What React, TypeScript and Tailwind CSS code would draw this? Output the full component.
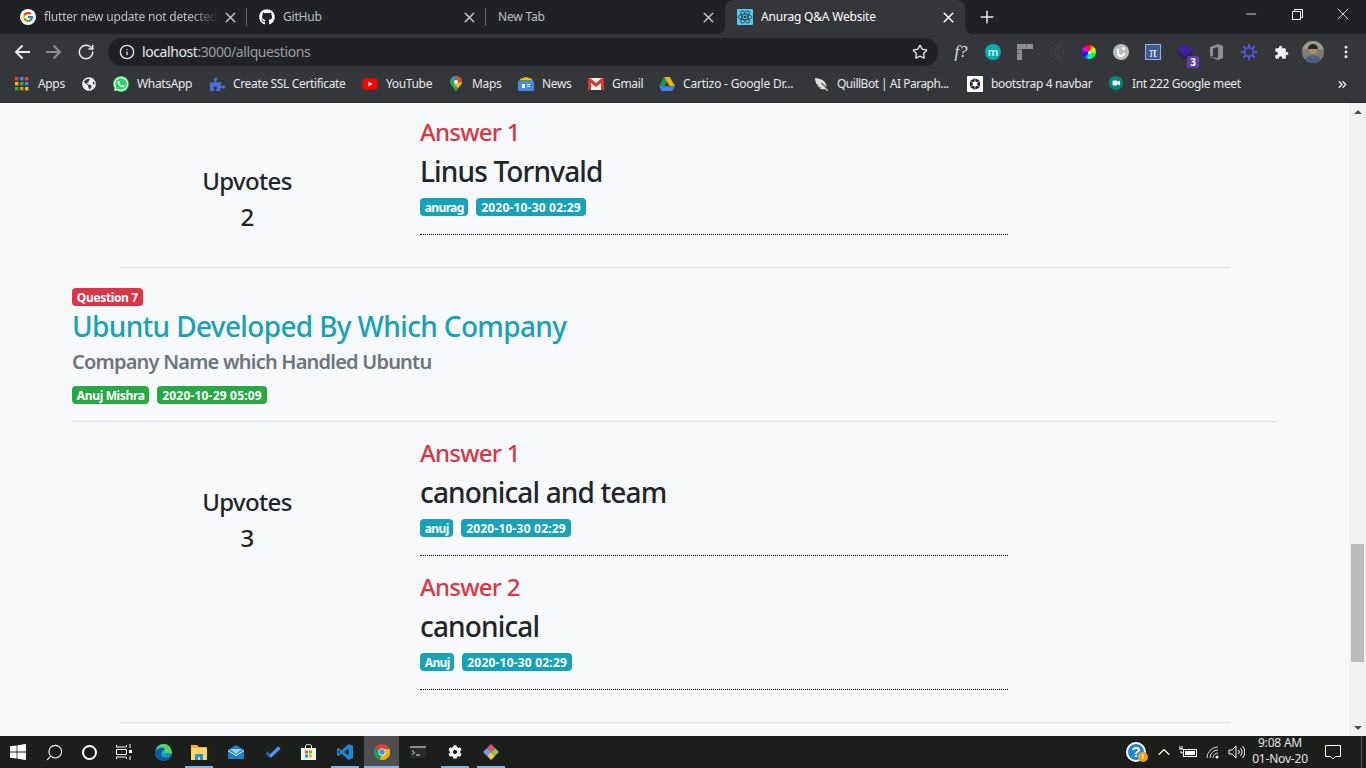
import React from "react";
import { X, Plus, RotateCw, Info, Star, MoreVertical, ChevronsRight, ChevronUp, Search, Minus } from "lucide-react";
import { FcGoogle } from "react-icons/fc";
import { FaGithub, FaGlobeAmericas, FaWhatsapp, FaPuzzlePiece, FaFeatherAlt, FaCog } from "react-icons/fa";

const Ui = "font-['Noto_Sans','Open_Sans',sans-serif]";

function ReactLogo() {
  return (
    <svg width="16" height="16" viewBox="0 0 16 16" className="rounded-[1px] bg-[#55c8ee]">
      <g fill="none" stroke="#20323c" strokeWidth="0.8">
        <ellipse cx="8" cy="8" rx="7" ry="2.7" />
        <ellipse cx="8" cy="8" rx="7" ry="2.7" transform="rotate(60 8 8)" />
        <ellipse cx="8" cy="8" rx="7" ry="2.7" transform="rotate(120 8 8)" />
      </g>
      <circle cx="8" cy="8" r="1.3" fill="#20323c" />
    </svg>
  );
}

function Tab({ icon, title, sep, active, fade }: { icon?: React.ReactNode; title: string; sep?: boolean; active?: boolean; fade?: boolean }) {
  return (
    <div className={`relative flex h-[34px] flex-none items-center pl-[12px] pr-[8px] ${active ? "w-[240px] rounded-t-[8px] bg-[#35363a] text-white" : "w-[239px] text-[#bdc1c6]"}`}>
      {active && <span className="absolute -left-[8px] bottom-0 h-[8px] w-[8px] bg-[radial-gradient(circle_at_0_0,transparent_8px,#35363a_8px)]" />}
      {active && <span className="absolute -right-[8px] bottom-0 h-[8px] w-[8px] bg-[radial-gradient(circle_at_100%_0,transparent_8px,#35363a_8px)]" />}
      {icon && <span className="mr-[8px] flex h-4 w-4 flex-none items-center justify-center">{icon}</span>}
      <span className={`flex-1 overflow-hidden whitespace-nowrap text-[12px] leading-[18px] tracking-[-0.2px] ${fade ? "[mask-image:linear-gradient(90deg,black_85%,transparent)]" : ""}`}>{title}</span>
      <X size={17} strokeWidth={2.2} className={`ml-1 flex-none ${active ? "text-white" : "text-[#bdc1c6]"}`} />
      {sep && <span className="absolute right-0 top-[8px] h-[18px] w-px bg-[#5f6368]" />}
    </div>
  );
}

function Bm({ w, icon, label, t = "tracking-[-0.35px]" }: { w: string; icon: React.ReactNode; label?: string; t?: string }) {
  return (
    <div className={`flex h-full flex-none items-center ${w}`}>
      <span className="flex h-4 w-4 flex-none items-center justify-center">{icon}</span>
      {label && <span className={`ml-[8px] whitespace-nowrap text-[12px] text-[#e8eaed] ${t}`}>{label}</span>}
    </div>
  );
}

function Ext({ children }: { children: React.ReactNode }) {
  return <div className="relative flex h-8 w-8 flex-none items-center justify-center">{children}</div>;
}

function Badge({ tone, t = "tracking-[-0.35px]", children }: { tone: "red" | "green" | "blue"; t?: string; children: React.ReactNode }) {
  const c = tone === "red" ? "bg-[#dc3545]" : tone === "green" ? "bg-[#28a745]" : "bg-[#17a2b8]";
  return <span className={`inline-flex h-[18px] items-center rounded-[4px] px-[4.8px] pt-[1px] text-[12px] font-bold leading-[16px] text-white ${t} ${c}`}>{children}</span>;
}

function Answer({ n, text, who, when }: { n: number; text: string; who: string; when: string }) {
  return (
    <div className="h-[134px]">
      <div className="h-[29px] text-[24px] font-medium leading-[26px] tracking-[-0.75px] text-[#dc3545]">Answer {n}</div>
      <div className="mt-[7px] h-[34px] text-[28px] font-medium leading-[33px] tracking-[-0.85px] text-[#212529]">{text}</div>
      <div className="mt-[9px] flex h-[18px] gap-2">
        <Badge tone="blue" t="tracking-[-0.65px]">{who}</Badge>
        <Badge tone="blue" t="tracking-[0.2px]">{when}</Badge>
      </div>
      <div className="mt-[18px] border-b border-dotted border-black" />
    </div>
  );
}

function Answers({ up, items }: { up: number; items: { text: string; who: string; when: string }[] }) {
  return (
    <div className="flex">
      <div className="w-[348px] flex-none pl-[2px] pt-[47px] text-center text-[24px] font-medium leading-[29px] tracking-[-0.65px] text-[#212529]">
        <div>Upvotes</div>
        <div className="mt-[7px]">{up}</div>
      </div>
      <div className="w-[588px] flex-none">
        {items.map((a, i) => (
          <Answer key={i} n={i + 1} {...a} />
        ))}
      </div>
    </div>
  );
}

function TabStrip() {
  return (
    <div className="flex h-[34px] flex-none items-start bg-[#202124] pl-[8px]">
      <Tab sep fade title="flutter new update not detected a" icon={<span className="flex h-4 w-4 items-center justify-center rounded-full bg-white"><FcGoogle size={12} /></span>} />
      <Tab sep title="GitHub" icon={<FaGithub size={16} color="#fff" />} />
      <Tab title="New Tab" />
      <Tab active title="Anurag Q&A Website" icon={<ReactLogo />} />
      <div className="ml-[12px] flex h-[34px] items-center">
        <Plus size={20} strokeWidth={1.8} color="#e8eaed" />
      </div>
      <div className="ml-auto flex h-[28px] items-center text-white">
        <div className="flex w-[46px] justify-center"><Minus size={16} strokeWidth={1.2} /></div>
        <div className="flex w-[46px] justify-center">
          <svg width="11" height="11" viewBox="0 0 11 11" fill="none" stroke="#fff"><path d="M.5 2.5h8v8h-8zM2.5 2.5v-2h8v8h-2" /></svg>
        </div>
        <div className="flex w-[46px] justify-center"><X size={20} strokeWidth={1} /></div>
      </div>
    </div>
  );
}

function Toolbar() {
  return (
    <div className="flex h-[32px] flex-none items-center bg-[#35363a] pl-[6px] pt-[4px]">
      <div className="flex h-8 w-8 items-center justify-center">
        <svg width="16" height="16" viewBox="0 0 16 16" fill="none" stroke="#e8eaed" strokeWidth="2"><path d="M16 8H2M8.500 1.500L2 8l6.500 6.500" /></svg>
      </div>
      <div className="flex h-8 w-8 items-center justify-center">
        <svg width="16" height="16" viewBox="0 0 16 16" fill="none" stroke="#8a8c8f" strokeWidth="2"><path d="M0 8h14M7.500 1.500L14 8l-6.500 6.500" /></svg>
      </div>
      <div className="flex h-8 w-8 items-center justify-center"><RotateCw size={18} strokeWidth={2} color="#e8eaed" /></div>
      <div className="ml-[6px] flex h-[28px] w-[830px] flex-none items-center rounded-full bg-[#202124] pl-[11px] pr-[10px]">
        <Info size={16} strokeWidth={2} color="#e8eaed" />
        <span className="ml-[7px] pb-[2px] text-[14px] tracking-[-0.42px] text-[#e8eaed]">localhost<span className="text-[#9aa0a6]">:3000/allquestions</span></span>
        <Star size={16} strokeWidth={2} color="#e8eaed" className="ml-auto" />
      </div>
      <div className="ml-[7px] flex items-center">
        <Ext><span className="font-['Liberation_Serif',serif] text-[17px] italic text-[#e0e0e0]">f?</span></Ext>
        <Ext><span className="flex h-4 w-4 items-center justify-center rounded-full bg-[#00adb5] text-[11px] font-medium leading-[14px] text-white">m</span></Ext>
        <Ext>
          <svg width="16" height="16" viewBox="0 0 16 16"><path d="M0 0h16v5H5v11H0z" fill="#8e8e8e" /><path d="M0 5h5v1H0zM0 9h3v1H0zM9 0h1v3H9z" fill="#5f5f5f" /></svg>
        </Ext>
        <Ext>
          <svg width="16" height="16" viewBox="0 0 16 16" fill="none" stroke="#44464a"><circle cx="8" cy="8" r="6.5" /><circle cx="8" cy="8" r="3" /></svg>
        </Ext>
        <Ext>
          <span className="flex h-[14px] w-[14px] items-center justify-center rounded-full bg-[conic-gradient(#f00,#ff0,#0f0,#0ff,#00f,#f0f,#f00)]"><span className="h-[3px] w-[3px] rounded-full bg-white" /></span>
        </Ext>
        <Ext>
          <svg width="16" height="16" viewBox="0 0 16 16"><circle cx="8" cy="8" r="8" fill="#bdbdbd" /><path d="M5 5v4a3 3 0 0 0 6 0" fill="none" stroke="#fff" strokeWidth="2" /><path d="M9 4l3 1" stroke="#fff" strokeWidth="2" /></svg>
        </Ext>
        <Ext><span className="flex h-4 w-4 items-center justify-center border border-[#9db0d0] bg-[#3d5a99] font-['Liberation_Serif',serif] text-[15px] leading-[14px] text-white">π</span></Ext>
        <Ext>
          <svg width="16" height="16" viewBox="0 0 16 16"><path d="M8 0l8 6-8 6-8-6z" fill="#3f1ea0" /><path d="M0 7l8 6 8-6v2l-8 6-8-6z" fill="#2c1478" /></svg>
          <span className="absolute bottom-[0px] right-[2px] flex h-[12px] w-[12px] items-center justify-center rounded-[2px] bg-[#5b3db5] text-[10px] font-bold leading-[12px] text-white">3</span>
        </Ext>
        <Ext>
          <svg width="14" height="16" viewBox="0 0 14 16"><path d="M0 3l8-3 5 2v12l-5 2-8-3 8 1V3L3 4.5v7L0 13z" fill="#8f8f8f" /></svg>
        </Ext>
        <Ext>
          <svg width="16" height="16" viewBox="0 0 16 16"><g stroke="#5256e6" strokeWidth="2"><path d="M8 0v16M0 8h16M2.3 2.3l11.4 11.4M13.7 2.3L2.3 13.7" /></g><circle cx="8" cy="8" r="4.4" fill="#35363a" stroke="#5256e6" strokeWidth="1.6" /></svg>
        </Ext>
        <Ext>
          <svg width="15" height="15" viewBox="0 0 24 24" fill="#f1f3f4"><path d="M20.500 11H19V7a2 2 0 0 0-2-2h-4V3.500a2.500 2.500 0 0 0-5 0V5H4a2 2 0 0 0-2 2v3.800h1.500a2.700 2.700 0 0 1 0 5.400H2V20a2 2 0 0 0 2 2h3.800v-1.500a2.700 2.700 0 0 1 5.400 0V22H17a2 2 0 0 0 2-2v-4h1.500a2.500 2.500 0 0 0 0-5z" /></svg>
        </Ext>
        <Ext>
          <svg width="22" height="22" viewBox="0 0 22 22" className="rounded-full">
            <rect width="22" height="22" fill="#7d8070" />
            <rect width="22" height="8" fill="#9a9c8c" />
            <circle cx="11" cy="9" r="4" fill="#b58b72" />
            <path d="M6 8a5 5 0 0 1 10 0z" fill="#2b2622" />
            <path d="M3 22c0-6 4-8 8-8s8 2 8 8z" fill="#4d6080" />
          </svg>
        </Ext>
        <div className="ml-[1px] flex h-8 w-8 items-center justify-center"><MoreVertical size={16} strokeWidth={2.4} color="#e8eaed" /></div>
      </div>
    </div>
  );
}

function Bookmarks() {
  return (
    <div className="flex h-[37px] flex-none items-center border-b border-b-[#2a2b2e] bg-[#35363a] pl-[14px]">
      <Bm w="w-[67px]" label="Apps" icon={
        <svg width="14" height="14" viewBox="0 0 14 14">
          {[0,5,10].map((y,i)=>[0,5,10].map((x,j)=>(<rect key={`${i}${j}`} x={x} y={y} width="3.4" height="3.4" fill={["#ea4335","#4285f4","#ea4335","#fbbc05","#34a853","#4285f4","#34a853","#ea8600","#fbbc05"][i*3+j]} />)))}
        </svg>} />
      <Bm w="w-[32px]" icon={<FaGlobeAmericas size={14} color="#f1f3f4" />} />
      <Bm w="w-[96px]" label="WhatsApp" icon={<span className="flex h-4 w-4 items-center justify-center rounded-full bg-[#25d366]"><FaWhatsapp size={16} color="#fff" /></span>} />
      <Bm w="w-[153px]" label="Create SSL Certificate" icon={<FaPuzzlePiece size={15} color="#4a6fd8" />} />
      <Bm w="w-[86px]" label="YouTube" icon={
        <svg width="16" height="12" viewBox="0 0 16 12"><rect width="15" height="11" x=".5" y=".5" rx="3" fill="#f00" /><path d="M6.5 3.5L10.5 6l-4 2.5z" fill="#fff" /></svg>} />
      <Bm w="w-[70px]" label="Maps" icon={
        <svg width="12" height="16" viewBox="0 0 12 16"><path d="M6 16C4 11 0 9 0 6a6 6 0 0 1 12 0c0 3-4 5-6 10z" fill="#34a853" /><path d="M1 2.5A6 6 0 0 1 6 0l-2 4z" fill="#4285f4" /><path d="M6 0a6 6 0 0 1 6 6H8z" fill="#ea4335" /><path d="M12 6c0 2-2 3.5-4 6L4 8z" fill="#fbbc05" /><circle cx="6" cy="6" r="2" fill="#fff" /></svg>} />
      <Bm w="w-[70px]" label="News" icon={
        <svg width="16" height="14" viewBox="0 0 16 14"><path d="M2 2l6-2 6 2v3H2z" fill="#fbbc05" /><path d="M1 3h14v2H1z" fill="#34a853" /><rect y="4" width="16" height="10" rx="1" fill="#4a86e8" /><path d="M4 7h3v4H4zM9 7h3v1H9zM9 9h3v1H9z" fill="#fff" /></svg>} />
      <Bm w="w-[71px]" label="Gmail" icon={
        <svg width="16" height="12" viewBox="0 0 16 12"><rect width="16" height="12" fill="#f1f1f1" /><path d="M0 0h2l6 5 6-5h2v12h-3V5L8 9 3 5v7H0z" fill="#d33b2c" /></svg>} />
      <Bm w="w-[154px]" t="tracking-[-0.2px]" label="Cartizo - Google Dr..." icon={
        <svg width="16" height="14" viewBox="0 0 16 14"><path d="M5.3 0h5.4l-5.3 9H0z" fill="#0f9d58" /><path d="M5.3 0h5.4L16 9h-5.4z" fill="#f4b400" /><path d="M0 9.3h16L13.3 14H2.7z" fill="#4285f4" /></svg>} />
      <Bm w="w-[154px]" t="tracking-[-0.5px]" label="QuillBot | AI Paraph..." icon={<FaFeatherAlt size={13} color="#dcdcdc" className="-scale-x-100" />} />
      <Bm w="w-[141px]" label="bootstrap 4 navbar" icon={
        <svg width="16" height="16" viewBox="0 0 16 16"><rect width="16" height="16" fill="#fff" rx="1" /><path d="M8 2l5 3v6l-5 3-5-3V5z" fill="#222" /><circle cx="8" cy="8" r="2.4" fill="#fff" /><path d="M8 2v12M3 5l10 6M13 5L3 11" stroke="#fff" strokeWidth=".7" /></svg>} />
      <Bm w="w-[228px]" label="Int 222 Google meet" icon={
        <svg width="14" height="16" viewBox="0 0 14 16"><path d="M7 0a7 7 0 0 1 0 14l-1 2v-2A7 7 0 0 1 7 0z" fill="#00897b" /><rect x="3.5" y="4.5" width="5" height="5" rx="1" fill="#fff" /><path d="M8.5 6l2.5-1.5v5L8.5 8z" fill="#fff" /></svg>} />
      <ChevronsRight size={13} strokeWidth={2.6} color="#e8eaed" />
    </div>
  );
}

function Page() {
  return (
    <div className="min-w-0 flex-1 overflow-hidden bg-[#f8f9fa] pl-[72px] pr-[72px] pt-[16px] font-['Noto_Sans',sans-serif]">
      <Answers up={2} items={[{ text: "Linus Tornvald", who: "anurag", when: "2020-10-30 02:29" }]} />
      <div className="ml-[48px] mt-[14px] w-[1110px] border-t border-black/10" />
      <div className="mt-[20px] flex h-[18px]"><Badge tone="red">Question 7</Badge></div>
      <div className="mt-[4px] h-[34px] text-[28px] font-medium leading-[33px] tracking-[-0.65px] text-[#17a2b8]">Ubuntu Developed By Which Company</div>
      <div className="mt-[6px] h-[24px] text-[20px] font-semibold leading-[24px] tracking-[-0.78px] text-[#6c757d]">Company Name which Handled Ubuntu</div>
      <div className="mt-[12px] flex h-[18px] gap-2">
        <Badge tone="green">Anuj Mishra</Badge>
        <Badge tone="green" t="tracking-[0.2px]">2020-10-29 05:09</Badge>
      </div>
      <div className="mt-[17px] border-t border-black/10" />
      <div className="pt-[18px]">
        <Answers up={3} items={[
          { text: "canonical and team", who: "anuj", when: "2020-10-30 02:29" },
          { text: "canonical", who: "Anuj", when: "2020-10-30 02:29" },
        ]} />
      </div>
      <div className="ml-[48px] mt-[14px] w-[1110px] border-t border-black/10" />
    </div>
  );
}

function Scrollbar() {
  return (
    <div className="flex w-[17px] flex-none flex-col items-center bg-[#f1f1f1]">
      <div className="flex h-[17px] w-full items-center justify-center">
        <span className="h-0 w-0 border-x-[4px] border-b-[4px] border-x-transparent border-b-[#505050]" />
      </div>
      <div className="mt-[424px] h-[118px] w-[13px] flex-none bg-[#bcbcbc]" />
      <div className="mt-auto flex h-[17px] w-full items-center justify-center">
        <span className="h-0 w-0 border-x-[4px] border-t-[4px] border-x-transparent border-t-[#505050]" />
      </div>
    </div>
  );
}

function TB({ w = "w-[36px]", on, hl, className = "", children }: { w?: string; on?: boolean; hl?: boolean; className?: string; children: React.ReactNode }) {
  return (
    <div className={`relative flex h-full flex-none items-center justify-center ${w} ${className} ${hl ? "bg-[#4f4f4f]" : ""}`}>
      {children}
      {on && <span className={`absolute bottom-0 h-[2px] bg-[#76b9ed] ${hl ? "inset-x-0" : "left-1/2 w-[28px] -translate-x-1/2"}`} />}
    </div>
  );
}

function Taskbar() {
  return (
    <div className="flex h-[32px] flex-none items-center bg-[#1c1e1c] font-['Noto_Sans',sans-serif] text-white">
      <TB>
        <svg width="16" height="16" viewBox="0 0 16 16" fill="#fff"><path d="M0 2.3l6.6-.9v6.2H0zM7.4 1.3L16 0v7.6H7.4zM0 8.4h6.6v6.2L0 13.7zM7.4 8.4H16V16l-8.6-1.3z" /></svg>
      </TB>
      <TB><Search size={19} strokeWidth={1.4} className="-scale-x-100" /></TB>
      <TB w="w-[34px]"><span className="h-[15px] w-[15px] rounded-full border-2 border-white" /></TB>
      <TB>
        <svg width="16" height="16" viewBox="0 0 16 16" fill="none" stroke="#fff"><path d="M.5 1v2h10V1M.5 15v-2h10v2M.5 5.5h10v5H.5z" /><path d="M14 0v4M14 12v4" /><rect x="13" y="6" width="3" height="3" fill="#fff" stroke="none" /></svg>
      </TB>
      <TB className="ml-[3px]">
        <svg width="17" height="17" viewBox="0 0 17 17"><defs><linearGradient id="ed" x1="0" y1="0" x2="1" y2="1"><stop offset="0" stopColor="#2fd5a5" /><stop offset="1" stopColor="#1173c7" /></linearGradient></defs><circle cx="8.5" cy="8.5" r="8.5" fill="url(#ed)" /><path d="M17 10c-1-4-5-5-8-4-3 1-4 5-1 7 2 1 5 1 8-1-1 3-4 5-7 5C4 17 0 13 0 8c2-5 13-7 17 2z" fill="#0c59a4" /><path d="M9 9.5c2-1 5-1 8 .5 0-5-3-10-8-10-3 0-6 2-7 4 4-2 10-1 7 5.500z" fill="#5fd068" /></svg>
      </TB>
      <TB on>
        <svg width="16" height="15" viewBox="0 0 16 15"><path d="M0 0h6l2 2h8v3H0z" fill="#e8b23d" /><rect y="3" width="16" height="12" fill="#fcd569" /><path d="M4 9h8v6H9v-3H7v3H4z" fill="#2b8fd6" /></svg>
      </TB>
      <TB w="w-[38px]">
        <svg width="16" height="14" viewBox="0 0 16 14"><path d="M8 0l8 5v9H0V5z" fill="#1b7fcb" /><path d="M0 5l8 5 8-5v1L8 11 0 6z" fill="#fff" /><path d="M2 4h12l-6 5z" fill="#9fd3f5" /></svg>
      </TB>
      <TB w="w-[35px]">
        <svg width="16" height="13" viewBox="0 0 16 13" fill="none"><path d="M1.500 6.500L5.500 10.500" stroke="#2458b8" strokeWidth="3.4" /><path d="M5 10.500L14.500 1.500" stroke="#4a97e8" strokeWidth="3.4" /></svg>
      </TB>
      <TB>
        <svg width="15" height="16" viewBox="0 0 15 16"><rect y="4" width="15" height="12" fill="#f3f3f3" /><path d="M4.500 4V2a2 2 0 0 1 2-1.500h2a2 2 0 0 1 2 1.500v2" fill="none" stroke="#e8e8e8" /><rect x="4" y="6.500" width="3" height="3" fill="#f25022" /><rect x="8" y="6.500" width="3" height="3" fill="#7fba00" /><rect x="4" y="10.500" width="3" height="3" fill="#00a4ef" /><rect x="8" y="10.500" width="3" height="3" fill="#ffb900" /></svg>
      </TB>
      <TB on w="w-[38px]">
        <svg width="16" height="16" viewBox="0 0 16 16"><path d="M11.500 0L16 2v12l-4.500 2L4.500 9.500 1.500 12 0 11V5l1.500-1 3 2.500z" fill="#1f8ad8" /><path d="M11.500 4.500L7 8l4.500 3.500zM1.500 6v4L3.500 8z" fill="#1c1e1c" /></svg>
      </TB>
      <TB on hl w="w-[35px]">
        <svg width="16" height="16" viewBox="0 0 16 16"><circle cx="8" cy="8" r="8" fill="#db4437" /><path d="M8 8L1 4.500A8 8 0 0 0 6 15.800z" fill="#0f9d58" /><path d="M8 8l-2 7.800A8 8 0 0 0 15.500 5H8z" fill="#f4b400" /><circle cx="8" cy="8" r="3.6" fill="#fff" /><circle cx="8" cy="8" r="2.800" fill="#4285f4" /></svg>
      </TB>
      <TB w="w-[38px]">
        <svg width="16" height="12" viewBox="0 0 16 12"><rect width="16" height="12" fill="#2b2b2b" /><rect width="16" height="2" fill="#8a8a8a" /><path d="M2 4.500L4.500 6.500 2 8.500M6 9h4" stroke="#ddd" fill="none" /></svg>
      </TB>
      <TB on w="w-[35px]"><FaCog size={14} color="#fff" /></TB>
      <TB on w="w-[38px]">
        <svg width="16" height="16" viewBox="0 0 16 16"><path d="M8 0l4 4-4 4-4-4z" fill="#d9546f" /><path d="M4 4l4 4-4 4-4-4z" fill="#6ea1e8" /><path d="M12 4l4 4-4 4-4-4z" fill="#8bc34a" /><path d="M8 8l4 4-4 4-4-4z" fill="#f0c75e" /></svg>
      </TB>
      <div className="ml-auto flex h-full items-center">
        <span className="relative flex h-[20px] w-[20px] items-center justify-center rounded-full border-2 border-white bg-[#1b87d6] font-['Liberation_Sans',sans-serif] text-[15px] font-bold leading-[16px] text-white">?
          <span className="absolute -bottom-[2px] -right-[4px] flex h-[10px] w-[10px] items-center justify-center rounded-full bg-[#f0a020] text-[7px] leading-[10px]">!</span>
        </span>
        <ChevronUp size={20} strokeWidth={1.3} className="ml-[8px]" />
        <svg width="18" height="12" viewBox="0 0 18 12" className="ml-[5px]" fill="none" stroke="#fff"><rect x="4.500" y="3.500" width="13" height="7" /><rect x="6" y="5" width="10" height="4" fill="#fff" stroke="none" /><path d="M1 0v3M3 0v3M0 3h4M2 5v2h3" /></svg>
        <svg width="16" height="14" viewBox="0 0 16 14" className="ml-[9px]" fill="none" stroke="#d8d8d8"><path d="M1 13A11 11 0 0 1 12 2M4 13a8 8 0 0 1 8-8M7 13a5 5 0 0 1 5-5" /><circle cx="11" cy="12" r="1.500" fill="#fff" stroke="none" /></svg>
        <svg width="17" height="14" viewBox="0 0 17 14" className="ml-[6px]" fill="none" stroke="#fff"><path d="M1 5h3l4-4v12L4 9H1zM10.500 5a3 3 0 0 1 0 4M12.500 3a6 6 0 0 1 0 8M14.500 1a9 9 0 0 1 0 12" /></svg>
        <div className="ml-[4px] flex w-[62px] -translate-y-[1px] flex-col items-center whitespace-nowrap text-[12px] leading-[16px] tracking-[-0.2px] text-[#e4e4e4]">
          <span>9:08 AM</span>
          <span>01-Nov-20</span>
        </div>
        <svg width="16" height="16" viewBox="0 0 16 16" className="ml-[14px]" fill="none" stroke="#fff"><path d="M.5 1.500h15v11h-5l-2.500 2.500-2.500-2.500h-5z" /></svg>
        <div className="ml-[20px] h-full w-[5px] border-l border-[#555]" />
      </div>
    </div>
  );
}

export default function App() {
  return (
    <div className={`flex h-screen w-[1366px] flex-col overflow-hidden ${Ui}`}>
      <TabStrip />
      <Toolbar />
      <Bookmarks />
      <div className="flex min-h-0 flex-1">
        <Page />
        <Scrollbar />
      </div>
      <Taskbar />
    </div>
  );
}
